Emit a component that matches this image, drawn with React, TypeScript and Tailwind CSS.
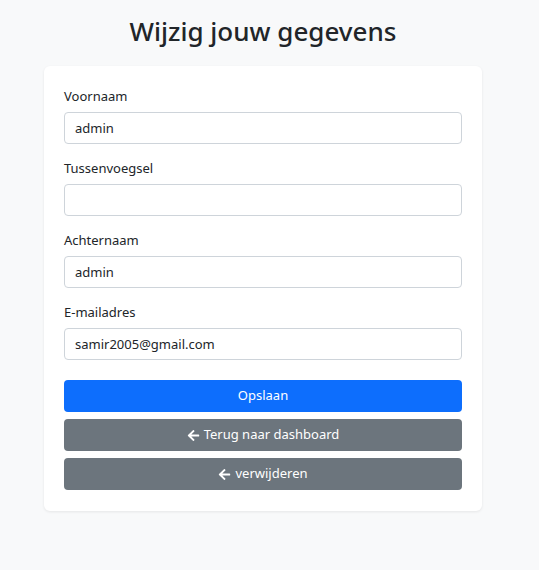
import React from 'react';
import { FaArrowLeft } from 'react-icons/fa';

const fields = [
    { label: 'Voornaam', value: 'admin' },
    { label: 'Tussenvoegsel', value: '' },
    { label: 'Achternaam', value: 'admin' },
    { label: 'E-mailadres', value: 'samir2005@gmail.com' },
];

const App: React.FC = () => {
    return (
        <div className="min-h-[570px] bg-[#f8f9fa] text-[#212529] font-['Noto_Sans',sans-serif]">
            <div className="ml-[44px] w-[438px] pt-[13px]">
                <h2 className="text-center text-[26px] font-medium leading-[36px] mb-[17px]">Wijzig jouw gegevens</h2>
                <div className="bg-white rounded-[6px] shadow-[0_1px_3px_rgba(0,0,0,0.08)] px-[20px] pt-[20px] pb-[21px]">
                    {fields.map((f) => (
                        <div key={f.label} className="mb-[14px]">
                            <label className="block text-[13px] leading-[21px] mb-[5px]">{f.label}</label>
                            <input
                                defaultValue={f.value}
                                className="block w-full h-[32px] px-[10px] text-[13px] border border-[#ced4da] rounded-[4px] bg-white outline-none"
                            />
                        </div>
                    ))}
                    <div className="flex flex-col gap-[7px] pt-[6px]">
                        <button className="h-[32px] w-full rounded-[4px] bg-[#0d6efd] text-white text-[13px]">Opslaan</button>
                        <button className="h-[32px] w-full rounded-[4px] bg-[#6c757d] text-white text-[13px] flex items-center justify-center gap-[4px]">
                            <FaArrowLeft className="w-[13px] h-[13px]" /> Terug naar dashboard
                        </button>
                        <button className="h-[32px] w-full rounded-[4px] bg-[#6c757d] text-white text-[13px] flex items-center justify-center gap-[4px]">
                            <FaArrowLeft className="w-[13px] h-[13px]" /> verwijderen
                        </button>
                    </div>
                </div>
            </div>
        </div>
    );
};

export default App;
